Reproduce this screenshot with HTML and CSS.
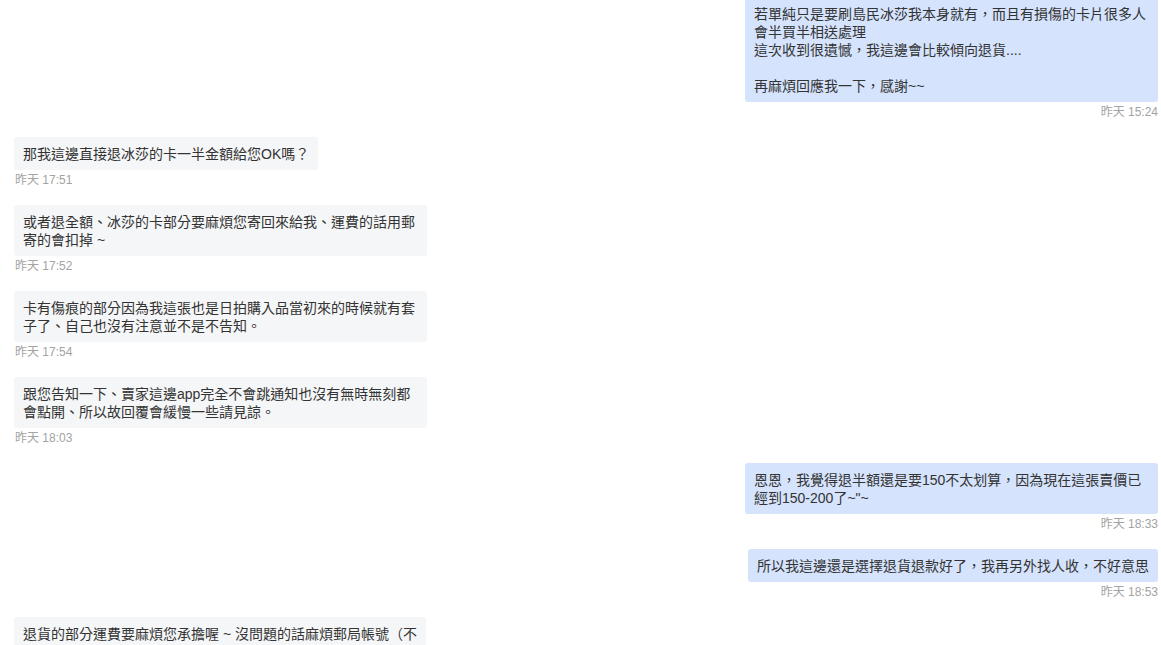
FILE: index.html
```html
<!DOCTYPE html>
<html lang="zh-Hant">
<head>
<meta charset="utf-8">
<title>Chat</title>
<link rel="stylesheet" href="styles.css">
</head>
<body>
<div class="chat">
  <div class="msg mine">
    <div class="bubble">若單純只是要刷島民冰莎我本身就有，而且有損傷的卡片很多人會半買半相送處理<br>這次收到很遺憾，我這邊會比較傾向退貨....<br><br>再麻煩回應我一下，感謝~~</div>
    <div class="time">昨天 15:24</div>
  </div>
  <div class="msg theirs">
    <div class="bubble">那我這邊直接退冰莎的卡一半金額給您OK嗎？</div>
    <div class="time">昨天 17:51</div>
  </div>
  <div class="msg theirs">
    <div class="bubble">或者退全額、冰莎的卡部分要麻煩您寄回來給我、運費的話用郵寄的會扣掉 ~</div>
    <div class="time">昨天 17:52</div>
  </div>
  <div class="msg theirs">
    <div class="bubble">卡有傷痕的部分因為我這張也是日拍購入品當初來的時候就有套子了、自己也沒有注意並不是不告知。</div>
    <div class="time">昨天 17:54</div>
  </div>
  <div class="msg theirs">
    <div class="bubble">跟您告知一下、賣家這邊app完全不會跳通知也沒有無時無刻都會點開、所以故回覆會緩慢一些請見諒。</div>
    <div class="time">昨天 18:03</div>
  </div>
  <div class="msg mine">
    <div class="bubble">恩恩，我覺得退半額還是要150不太划算，因為現在這張賣價已經到150-200了~"~</div>
    <div class="time">昨天 18:33</div>
  </div>
  <div class="msg mine">
    <div class="bubble">所以我這邊還是選擇退貨退款好了，我再另外找人收，不好意思</div>
    <div class="time">昨天 18:53</div>
  </div>
  <div class="msg theirs">
    <div class="bubble">退貨的部分運費要麻煩您承擔喔 ~ 沒問題的話麻煩郵局帳號（不</div>
    <div class="time">昨天 19:02</div>
  </div>
</div>
</body>
</html>
```

FILE: styles.css
```css
html, body {
  margin: 0;
  padding: 0;
  background: #ffffff;
}

body {
  font-family: "Liberation Sans", "Noto Sans CJK TC", sans-serif;
  color: #333333;
  overflow: hidden;
  height: 645px;
}

.chat {
  display: flex;
  flex-direction: column;
  gap: 17px;
  margin-top: -3px;
  padding: 0 3px 0 14px;
}

.msg {
  display: flex;
  flex-direction: column;
}

.msg.mine {
  align-items: flex-end;
}

.msg.theirs {
  align-items: flex-start;
}

.bubble {
  max-width: 395px;
  padding: 8px 9px 7px;
  font-size: 14px;
  line-height: 18px;
  border-radius: 3px;
  word-break: break-all;
}

.mine .bubble {
  background: #d5e3fd;
}

.theirs .bubble {
  background: #f5f6f7;
}

.time {
  margin-top: 2px;
  font-size: 12px;
  line-height: 16px;
  color: #a3a3a3;
}

.theirs .time {
  padding-left: 1px;
}
```
